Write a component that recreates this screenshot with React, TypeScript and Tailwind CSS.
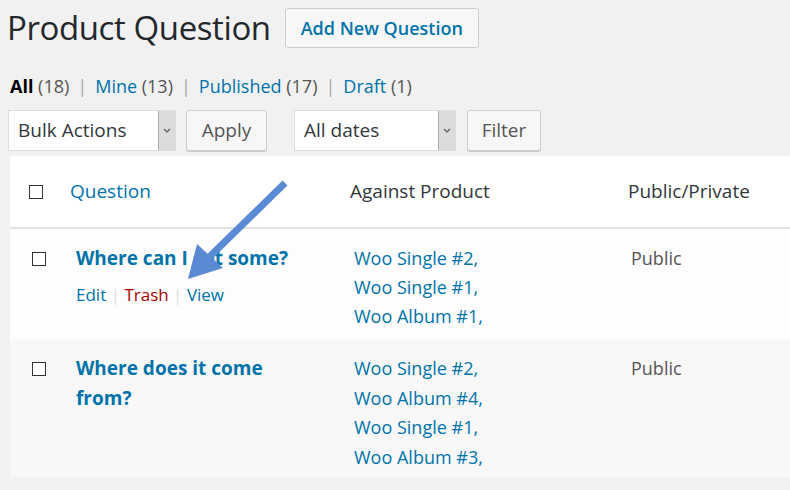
import React from "react";

function Check({ className = "" }: { className?: string }) {
  return <span className={"block w-[14px] h-[14px] border-[1.5px] border-[#333] bg-white " + className} />;
}

function SelectBox({ label, w }: { label: string; w: string }) {
  return (
    <div className={"flex h-[41px] border border-[#ddd] bg-white " + w}>
      <div className="flex-1 flex items-center pl-[9px] text-[19px] text-[#32373c]">{label}</div>
      <div className="w-[17px] bg-[#dcdcdc] border-l border-[#aaa] flex items-center justify-center">
        <svg width="8" height="5" viewBox="0 0 8 5"><path d="M1 1 L4 4 L7 1" stroke="#555" strokeWidth="1.2" fill="none" /></svg>
      </div>
    </div>
  );
}

function Btn({ label, w }: { label: string; w: string }) {
  return (
    <div className={"h-[41px] flex items-center justify-center border border-[#ccc] rounded-[3px] bg-[#f7f7f7] text-[19px] text-[#555] shadow-[0_1px_0_#ccc] " + w}>
      {label}
    </div>
  );
}

export default function App() {
  const link = "text-[#0073aa]";
  return (
    <div className="relative w-[790px] h-[490px] bg-[#f1f1f1] overflow-hidden font-['Open_Sans',sans-serif]">
      <div className="flex items-center pl-[7px] pt-[8px]">
        <h1 className="text-[33px] leading-[40px] tracking-[-0.4px] text-[#23282d]">Product Question</h1>
        <div className="ml-[14px] h-[40px] px-[15px] flex items-center border border-[#ccc] rounded-[3px] bg-[#f7f7f7] text-[#0073aa] font-semibold text-[18px]">
          Add New Question
        </div>
      </div>
      <div className="pl-[10px] mt-[26px] text-[18px] leading-[24px] text-[#555] flex gap-[8px]">
        <span><span className="font-bold text-black">All</span> (18)</span>
        <span className="text-[#aaa]">|</span>
        <span><span className={link}>Mine</span> (13)</span>
        <span className="text-[#aaa]">|</span>
        <span><span className={link}>Published</span> (17)</span>
        <span className="text-[#aaa]">|</span>
        <span><span className={link}>Draft</span> (1)</span>
      </div>
      <div className="flex pl-[8px] mt-[12px]">
        <SelectBox label="Bulk Actions" w="w-[168px]" />
        <Btn label="Apply" w="w-[81px] ml-[10px]" />
        <SelectBox label="All dates" w="w-[162px] ml-[27px]" />
        <Btn label="Filter" w="w-[74px] ml-[11px]" />
      </div>
      <div className="ml-[10px] mt-[5px] bg-white">
        <div className="grid grid-cols-[60px_280px_278px_1fr] h-[73px] items-center border-b-[2px] border-[#e3e3e3] text-[19px]">
          <div className="pl-[19px]"><Check /></div>
          <div className={link}>Question</div>
          <div className="text-[#32373c]">Against Product</div>
          <div className="text-[#32373c]">Public/Private</div>
        </div>
        <div className="grid grid-cols-[66px_278px_277px_1fr] bg-[#fdfdfd] pt-[15px] h-[111px] text-[18px] leading-[29px]">
          <div className="pl-[22px] pt-[8px]"><Check /></div>
          <div>
            <div className={link + " font-bold text-[19px]"}>Where can I get some?</div>
            <div className="mt-[7px] text-[17px]">
              <span className={link}>Edit</span> <span className="text-[#ddd]">|</span>{" "}
              <span className="text-[#a00]">Trash</span> <span className="text-[#ddd]">|</span>{" "}
              <span className={link}>View</span>
            </div>
          </div>
          <div className={link}>
            <div>Woo Single #2,</div>
            <div>Woo Single #1,</div>
            <div>Woo Album #1,</div>
          </div>
          <div className="text-[#555]">Public</div>
        </div>
        <div className="grid grid-cols-[66px_278px_277px_1fr] bg-[#f8f8f8] pt-[14px] h-[137px] text-[18px] leading-[29.5px]">
          <div className="pl-[22px] pt-[8px]"><Check /></div>
          <div className={link + " font-bold text-[19px] pr-[40px]"}>Where does it come from?</div>
          <div className={link}>
            <div>Woo Single #2,</div>
            <div>Woo Album #4,</div>
            <div>Woo Single #1,</div>
            <div>Woo Album #3,</div>
          </div>
          <div className="text-[#555]">Public</div>
        </div>
      </div>
      <svg className="absolute left-0 top-0 pointer-events-none" width="790" height="490">
        <line x1="285" y1="183" x2="200" y2="266" stroke="#5a8ad4" strokeWidth="7" />
        <polygon points="188,279 197,244 223,268" fill="#5a8ad4" />
      </svg>
    </div>
  );
}
